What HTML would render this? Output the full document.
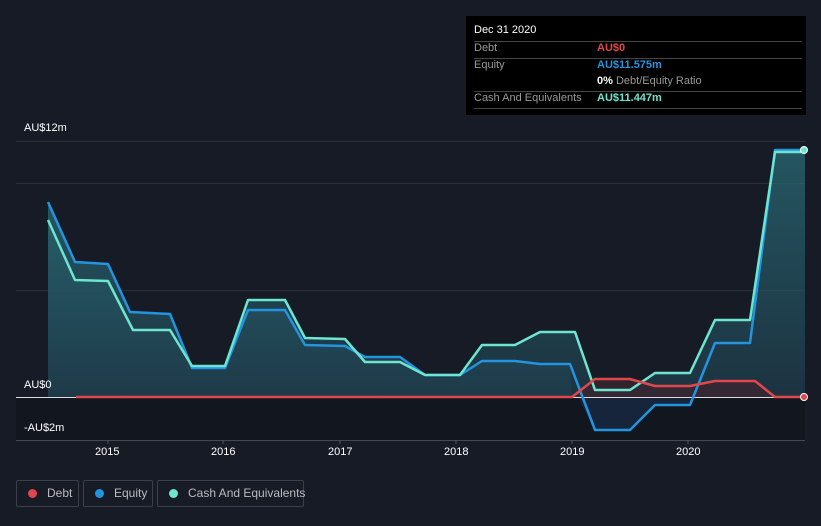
<!DOCTYPE html>
<html><head><meta charset="utf-8"><style>
body{margin:0;width:821px;height:526px;background:#161b26;font-family:"Liberation Sans",sans-serif;overflow:hidden;position:relative}
.t{position:absolute;color:#fff;font-size:11px}
.tip{position:absolute;left:466px;top:16px;width:340px;height:99px;background:#000;font-size:11px}
.tip .r{position:absolute;left:8px;width:328px;border-top:1px solid #444}
.lg{position:absolute;top:480px;height:27px;border:1px solid #3a3f4a;border-radius:2px;color:#bbb;font-size:12px;line-height:25px;box-sizing:border-box;white-space:nowrap}
.lg i{display:inline-block;width:9px;height:9px;border-radius:50%;margin:0 10px 0 11px;vertical-align:-1px}
</style></head><body>
<svg width="821" height="526" style="position:absolute;left:0;top:0" stroke-linejoin="round">
<defs><linearGradient id="g" x1="0" y1="0" x2="0" y2="1"><stop offset="0" stop-color="#2a6f7a" stop-opacity=".7"/><stop offset="1" stop-color="#1f3d4c" stop-opacity=".7"/></linearGradient></defs>
<rect x="16" y="397" width="789" height="43" fill="#12161f"/>
<g stroke="#2c313b" stroke-width="1"><line x1="16" y1="141.5" x2="805" y2="141.5"/><line x1="16" y1="183.5" x2="805" y2="183.5"/><line x1="16" y1="290.5" x2="805" y2="290.5"/><line x1="16" y1="440.5" x2="805" y2="440.5" stroke="#444a55"/></g>
<polygon fill="url(#g)" points="48,397 48,202 75,262 108,264 130,312 170,314 192,368 225,368 248,310 285,310 305,345 345,346 365,357 400,357 425,375 460,375 482,361 515,361 540,364 570,364 572,397 48,397"/>
<polygon fill="url(#g)" points="48,220 75,280 108,281 133,330 170,330 192,366 225,366 248,300 285,300 305,338 345,339 365,362 400,362 425,375 460,375 482,345 515,345 540,332 575,332 595,390 630,390 655,373 690,373 715,320 750,320 775,150 805,150 805,397 48,397"/>
<polygon fill="#3a2530" opacity=".8" points="572,397 595,379 630,379 655,386 690,386 715,381 755,381 775,397"/>
<polygon fill="#1a3050" opacity=".6" points="578,397 595,430 630,430 655,405 690,405 695,397"/>
<line x1="16" y1="397.5" x2="805" y2="397.5" stroke="#ddd" stroke-width="1"/>
<polyline fill="none" stroke="#2394df" stroke-width="2.5" points="48,202 75,262 108,264 130,312 170,314 192,368 225,368 248,310 285,310 305,345 345,346 365,357 400,357 425,375 460,375 482,361 515,361 540,364 570,364 595,430 630,430 655,405 690,405 715,343 750,343 775,150 805,150"/>
<polyline fill="none" stroke="#6ee6cf" stroke-width="2.5" points="48,220 75,280 108,281 133,330 170,330 192,366 225,366 248,300 285,300 305,338 345,339 365,362 400,362 425,375 460,375 482,345 515,345 540,332 575,332 595,390 630,390 655,373 690,373 715,320 750,320 775,152 805,152"/>
<polyline fill="none" stroke="#e0474c" stroke-width="2.5" points="76,397 572,397 595,379 630,379 655,386 690,386 715,381 755,381 775,397 805,397"/>
<circle cx="804" cy="150" r="3.5" fill="#6ee6cf" stroke="#fff"/><circle cx="804" cy="397" r="3.5" fill="#e0474c" stroke="#fff"/>
<g stroke="#555" ><line x1="108" y1="440" x2="108" y2="444"/><line x1="223" y1="440" x2="223" y2="444"/><line x1="340" y1="440" x2="340" y2="444"/><line x1="456" y1="440" x2="456" y2="444"/><line x1="572" y1="440" x2="572" y2="444"/><line x1="688" y1="440" x2="688" y2="444"/></g>
</svg>
<div class="t" style="left:24px;top:122px">AU$12m</div>
<div class="t" style="left:24px;top:379px">AU$0</div>
<div class="t" style="left:24px;top:422px">-AU$2m</div>
<div class="t" style="left:95px;top:446px">2015</div>
<div class="t" style="left:211px;top:446px">2016</div>
<div class="t" style="left:328px;top:446px">2017</div>
<div class="t" style="left:444px;top:446px">2018</div>
<div class="t" style="left:560px;top:446px">2019</div>
<div class="t" style="left:676px;top:446px">2020</div>
<div class="tip">
<div style="position:absolute;left:8px;top:8px;color:#fff">Dec 31 2020</div>
<div class="r" style="top:25px"></div><div class="r" style="top:42px"></div><div class="r" style="top:75px"></div><div class="r" style="top:92px"></div>
<div style="position:absolute;left:8px;top:26px;color:#999">Debt</div><div style="position:absolute;left:131px;top:26px;color:#e0474c;font-weight:bold">AU$0</div>
<div style="position:absolute;left:8px;top:43px;color:#999">Equity</div><div style="position:absolute;left:131px;top:43px;color:#2394df;font-weight:bold">AU$11.575m</div>
<div style="position:absolute;left:131px;top:59px;color:#999"><b style="color:#fff">0%</b> Debt/Equity Ratio</div>
<div style="position:absolute;left:8px;top:76px;color:#999">Cash And Equivalents</div><div style="position:absolute;left:131px;top:76px;color:#6ee6cf;font-weight:bold">AU$11.447m</div>
</div>
<div class="lg" style="left:16px;width:63px"><i style="background:#e0474c"></i>Debt</div>
<div class="lg" style="left:83px;width:70px"><i style="background:#2394df"></i>Equity</div>
<div class="lg" style="left:157px;width:147px"><i style="background:#6ee6cf"></i>Cash And Equivalents</div>
</body></html>
